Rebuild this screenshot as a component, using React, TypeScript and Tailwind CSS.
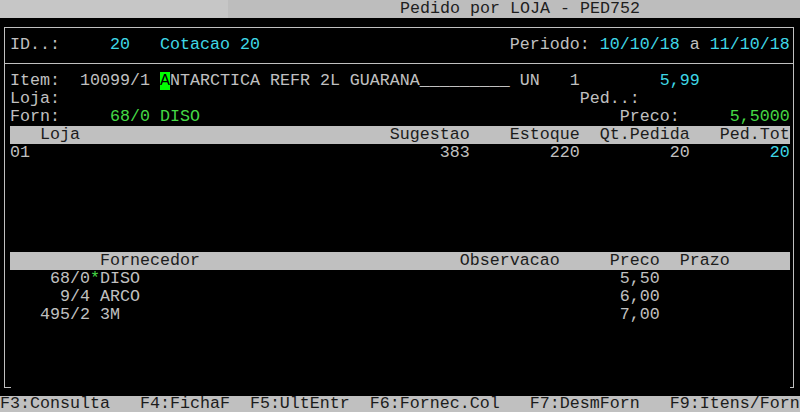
import React from "react";

type Seg = [number, string, string?];

const G = "text-[#c0c0c0]";
const C = "text-[#3fd7e6]";
const N = "text-[#45d845]";
const K = "text-[#1c1c1c]";

function Line({ segs, className = "" }: { segs: Seg[]; className?: string }) {
  let cur = 0;
  const parts: React.ReactNode[] = [];
  segs.forEach(([col, text, cls], i) => {
    if (col > cur) parts.push(<span key={"s" + i}>{" ".repeat(col - cur)}</span>);
    parts.push(
      <span key={i} className={cls}>
        {text}
      </span>
    );
    cur = col + text.length;
  });
  return <div className={"h-[18px] whitespace-pre " + className}>{parts}</div>;
}

function Band({ segs }: { segs: Seg[] }) {
  return (
    <div className="h-[18px] flex">
      <div className="ml-[10px] w-[780px] h-[18px] bg-[#c0c0c0]">
        <Line segs={segs.map(([c, t, k]) => [c - 1, t, k] as Seg)} className={K} />
      </div>
    </div>
  );
}

function Empty() {
  return <div className="h-[18px]" />;
}

export default function App() {
  return (
    <div className="w-[800px] h-[412px] bg-black overflow-hidden font-['Liberation_Mono','Courier_New',monospace] text-[16.66px] leading-[18px] text-[#c0c0c0]">
      {/* title bar */}
      <div className="h-[18px] flex">
        <div className="w-[228px] h-[18px] bg-[#c6c6c6]" />
        <div className="flex-1 h-[18px] bg-[#bdbdbd] pl-[172px] whitespace-pre text-[#1e1e1e]">
          Pedido por LOJA - PED752
        </div>
      </div>

      {/* frame */}
      <div className="mt-[9px] ml-[4px] w-[790px] border-t border-l border-r border-[#c0c0c0]">
        <div className="-ml-[5px] w-[800px] pt-[8px]">
          <Line
            segs={[
              [1, "ID..:", G],
              [11, "20", C],
              [16, "Cotacao 20", C],
              [51, "Periodo:", G],
              [60, "10/10/18", C],
              [69, "a", G],
              [71, "11/10/18", C],
            ]}
          />
          <div className="h-[18px] pt-[9px]">
            <div className="ml-[4px] w-[790px] h-px bg-[#c0c0c0]" />
          </div>
          <div className="h-[18px] whitespace-pre flex">
            <Line segs={[[1, "Item:", G], [8, "10099/1 ", G]]} />
            <span className="bg-[#00ff00] text-black">A</span>
            <Line
              segs={[
                [0, "NTARCTICA REFR 2L GUARANA_________", G],
                [35, "UN", G],
                [40, "1", G],
                [49, "5,99", C],
              ]}
            />
          </div>
          <Line segs={[[1, "Loja:", G], [58, "Ped..:", G]]} />
          <Line segs={[[1, "Forn:", G], [11, "68/0 DISO", N], [62, "Preco:", G], [73, "5,5000", N]]} />
          <Band
            segs={[
              [4, "Loja"],
              [39, "Sugestao"],
              [51, "Estoque"],
              [60, "Qt.Pedida"],
              [72, "Ped.Tot"],
            ]}
          />
          <Line
            segs={[
              [1, "01", G],
              [44, "383", G],
              [55, "220", G],
              [67, "20", G],
              [77, "20", C],
            ]}
          />
          <Empty />
          <Empty />
          <Empty />
          <Empty />
          <Empty />
          <Band
            segs={[
              [10, "Fornecedor"],
              [46, "Observacao"],
              [61, "Preco"],
              [68, "Prazo"],
            ]}
          />
          <Line segs={[[5, "68/0", G], [9, "*", N], [10, "DISO", G], [62, "5,50", G]]} />
          <Line segs={[[6, "9/4", G], [10, "ARCO", G], [62, "6,00", G]]} />
          <Line segs={[[4, "495/2", G], [10, "3M", G], [62, "7,00", G]]} />
          <Empty />
          <Empty />
          <Empty />
        </div>
        <div className="h-[10px] flex items-end justify-between">
          <div className="w-[6px] h-px bg-[#c0c0c0]" />
          <div className="w-[3px] h-px bg-[#c0c0c0]" />
        </div>
      </div>

      {/* function keys */}
      <div className="mt-[8px] h-[16px] bg-[#c0c0c0] text-[#1c1c1c] whitespace-pre leading-[16px]">
        {"F3:Consulta   F4:FichaF  F5:UltEntr  F6:Fornec.Col   F7:DesmForn   F9:Itens/Forn"}
      </div>
    </div>
  );
}
